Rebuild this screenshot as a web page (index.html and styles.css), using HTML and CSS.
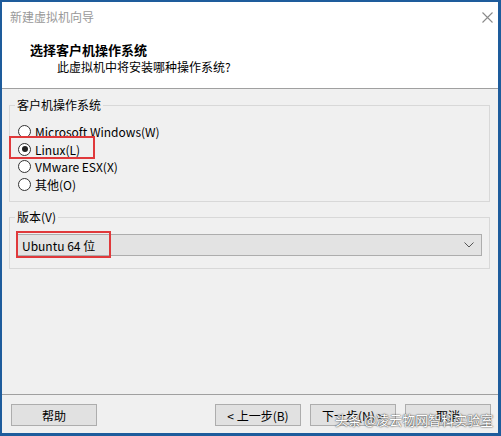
FILE: index.html
```html
<!DOCTYPE html>
<html lang="zh-CN">
<head>
    <meta charset="UTF-8">
    <title>新建虚拟机向导</title>
    <link rel="stylesheet" href="styles.css">
</head>
<body>

    <div class="window">
        <div class="titlebar">
            <span class="title">新建虚拟机向导</span>
            <svg class="close" width="11" height="11" viewBox="0 0 11 11">
                <path d="M0.5 0.5 L10.5 10.5 M10.5 0.5 L0.5 10.5" stroke="#8a8a8a" stroke-width="1.1" fill="none"/>
            </svg>
        </div>

        <div class="header">
            <div class="heading">选择客户机操作系统</div>
            <div class="subheading">此虚拟机中将安装哪种操作系统?</div>
        </div>

        <div class="body">
            <fieldset class="group group-os">
                <legend>客户机操作系统</legend>
                <div class="radio"><span class="dot"></span>Microsoft Windows(W)</div>
                <div class="radio"><span class="dot checked"></span>Linux(L)</div>
                <div class="radio"><span class="dot"></span>VMware ESX(X)</div>
                <div class="radio"><span class="dot"></span>其他(O)</div>
                <!-- highlight around the chosen option -->
                <div class="mark mark-linux"></div>
            </fieldset>

            <fieldset class="group group-version">
                <legend>版本(V)</legend>
                <div class="select">
                    <span>Ubuntu 64 位</span>
                    <svg width="10" height="6" viewBox="0 0 10 6">
                        <path d="M0.5 0.5 L5 5 L9.5 0.5" stroke="#555" stroke-width="1" fill="none"/>
                    </svg>
                </div>
                <div class="mark mark-version"></div>
            </fieldset>
        </div>

        <div class="footer">
            <button class="btn">帮助</button>
            <div class="spacer"></div>
            <button class="btn">&lt; 上一步(B)</button>
            <button class="btn">下一步(N) &gt;</button>
            <button class="btn">取消</button>
            <div class="watermark">头条 @凌云物网智科实验室</div>
        </div>
    </div>

</body>
</html>
```

FILE: styles.css
```css
body {
    margin: 0;
    padding: 0;
    font-family: "Noto Sans CJK SC", "Noto Sans", sans-serif;
    font-size: 12px;
    color: #000;
    background: #fff;
}

/* Window frame */
.window {
    width: 501px;
    height: 436px;
    box-sizing: border-box;
    border: 2px solid #1e5c9c;
    border-right-width: 3px;
    border-bottom-width: 3px;
    display: flex;
    flex-direction: column;
    background: #f0f0f0;
}

.titlebar {
    height: 30px;
    background: #fff;
    display: flex;
    align-items: center;
    justify-content: space-between;
    padding: 0 5px 0 8px;
}
.title {
    color: #999;
    line-height: 16px;
}

/* Wizard header */
.header {
    background: #fff;
    border-bottom: 1px solid #a0a0a0;
    padding: 9px 0 0 28px;
    height: 47px;
}
.heading {
    font-size: 13px;
    font-weight: bold;
    line-height: 17px;
}
.subheading {
    line-height: 17px;
    margin-left: 27px;
}

/* Main area */
.body {
    height: 305px;
    box-sizing: border-box;
    padding: 8px 8px 0 7px;
}

.group {
    position: relative;
    margin: 0;
    border: 1px solid #d8d8d8;
    padding: 0 7px;
}
.group legend {
    padding: 0 2px;
    margin-left: -2px;
    line-height: 16px;
}
.group-os {
    padding-top: 10px;
    padding-bottom: 8px;
}
.group-version {
    margin-top: 7px;
    padding-top: 9px;
    padding-bottom: 12px;
}

.radio {
    height: 17.5px;
    display: flex;
    align-items: center;
    padding-left: 1px;
}
.dot {
    width: 11px;
    height: 11px;
    border: 1px solid #333;
    border-radius: 50%;
    background: #fff;
    margin-right: 4px;
    display: flex;
    align-items: center;
    justify-content: center;
}
.dot.checked::after {
    content: "";
    width: 6px;
    height: 6px;
    border-radius: 50%;
    background: #222;
}

.select {
    height: 22px;
    box-sizing: border-box;
    border: 1px solid #adadad;
    background: #e3e3e3;
    display: flex;
    align-items: center;
    justify-content: space-between;
    padding: 0 7px 0 4px;
}

/* Red annotation boxes */
.mark {
    position: absolute;
    border: 2px solid #e0393b;
}
.mark-linux {
    left: -1px;
    top: 23px;
    width: 82px;
    height: 19px;
}
.mark-version {
    left: 6px;
    top: 6px;
    width: 91px;
    height: 23px;
}

/* Button row */
.footer {
    position: relative;
    flex: 1;
    border-top: 1px solid #a0a0a0;
    display: flex;
    align-items: flex-start;
    gap: 9px;
    padding: 9px 7px 0 9px;
}
.spacer {
    flex: 1;
}
.btn {
    width: 86px;
    height: 22px;
    border: 1px solid #adadad;
    background: #e1e1e1;
    font-family: inherit;
    font-size: 12px;
    color: #000;
    padding: 0;
}

.watermark {
    position: absolute;
    left: 333px;
    top: 17px;
    white-space: nowrap;
    font-size: 13px;
    line-height: 16px;
    color: #fff;
    text-shadow: 0 0 2px #444, 0 0 1px #444;
}
```
